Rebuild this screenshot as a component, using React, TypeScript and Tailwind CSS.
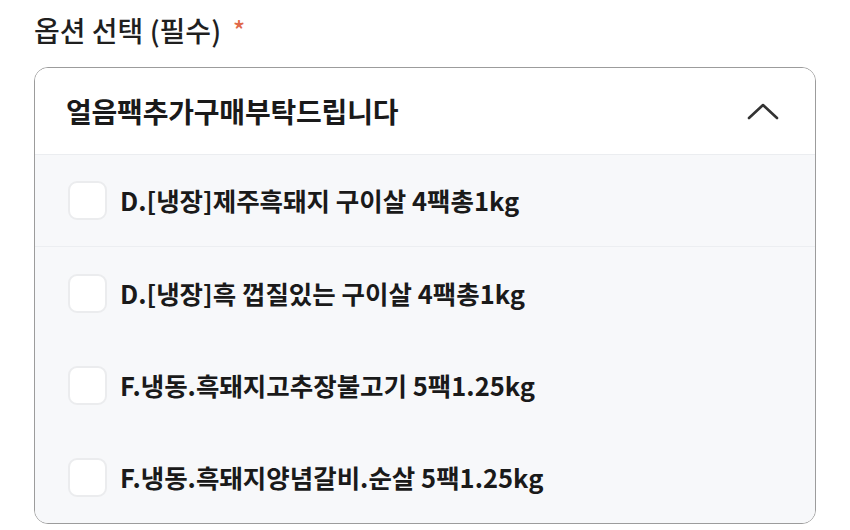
const options = [
  "D.[냉장]제주흑돼지 구이살 4팩총1kg",
  "D.[냉장]흑 껍질있는 구이살 4팩총1kg",
  "F.냉동.흑돼지고추장불고기 5팩1.25kg",
  "F.냉동.흑돼지양념갈비.순살 5팩1.25kg",
];

export default function App() {
  return (
    <div
      className="w-[850px] h-[530px] bg-white px-[34px] pt-[8px]"
      style={{ fontFamily: '"Noto Sans CJK KR", "Noto Sans", sans-serif' }}
    >
      <div className="flex items-center gap-[12px] h-[44px] text-[28px] font-medium text-[#1f1f1f]">
        <span>옵션 선택 (필수)</span>
        <span className="text-[#e0694a] text-[25px]">*</span>
      </div>
      <div className="mt-[15px] w-[782px] rounded-[14px] border-[1.5px] border-[#9c9c9c] overflow-hidden">
        <div className="flex items-center justify-between h-[87px] px-[31px] bg-white border-b border-[#ebedf0]">
          <span className="text-[28px] font-bold text-[#1a1a1a] tracking-[-0.2px]">얼음팩추가구매부탁드립니다</span>
          <svg width="32" height="18" viewBox="0 0 32 18" fill="none" className="mr-[5px]">
            <path d="M2 16 L16 3 L30 16" stroke="#333" strokeWidth="2.6" strokeLinecap="round" strokeLinejoin="round" />
          </svg>
        </div>
        <div className="bg-[#f7f8fa]">
          {options.map((o, i) => (
            <div
              key={o}
              className={`flex items-center h-[92px] px-[33px] ${i === 0 ? "border-b border-[#eceef1]" : ""}`}
            >
              <div className="w-[39px] h-[39px] rounded-[9px] bg-white border-2 border-[#ebecee]" />
              <span className="ml-[13px] text-[25.5px] font-semibold text-[#1a1a1a]">{o}</span>
            </div>
          ))}
        </div>
      </div>
    </div>
  );
}
